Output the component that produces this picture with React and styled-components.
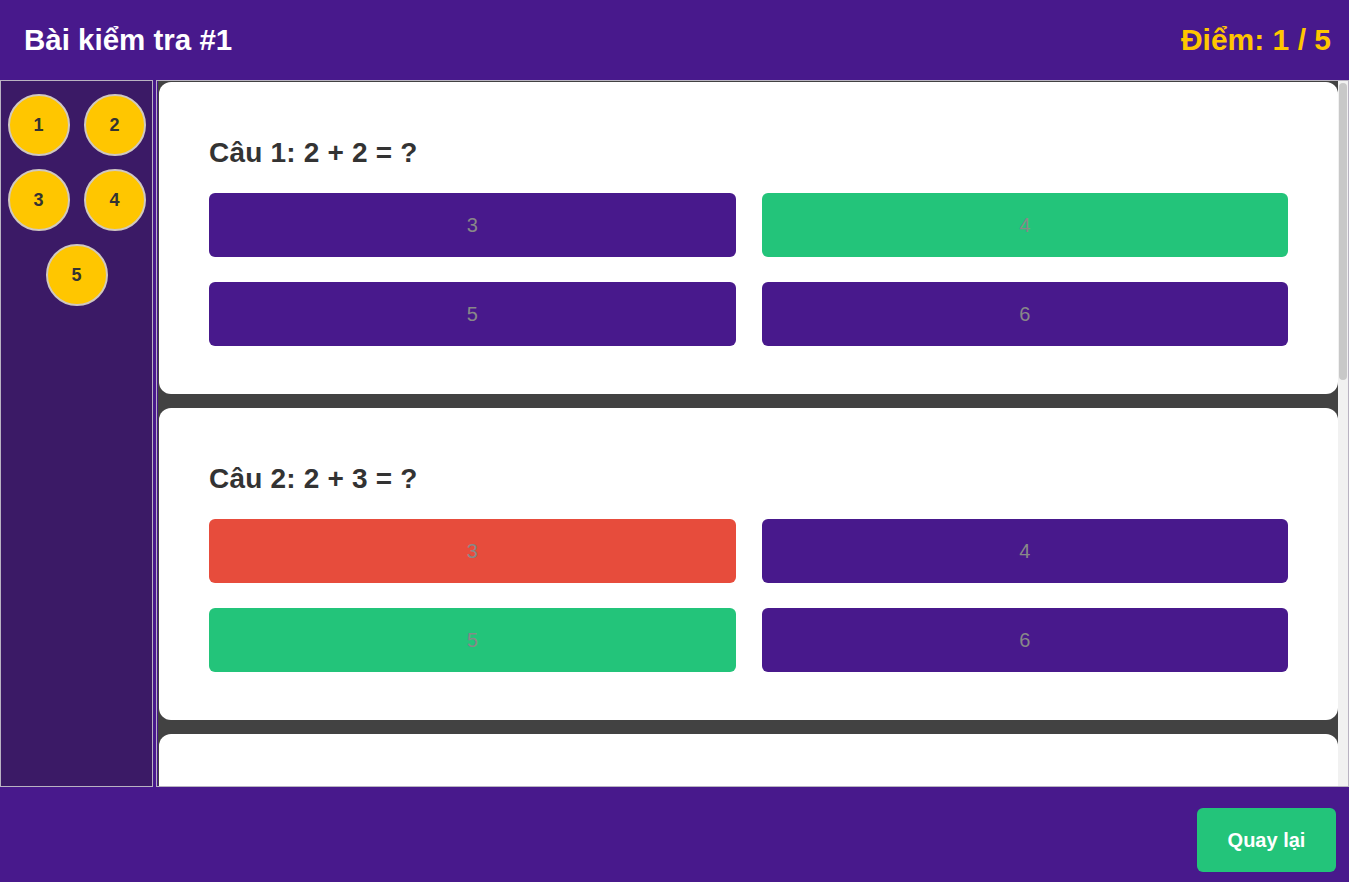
import React from 'react'
import styled, { createGlobalStyle } from 'styled-components'

const GlobalStyle = createGlobalStyle`
  html, body {
    margin: 0;
    padding: 0;
  }
  body {
    font-family: 'Liberation Sans', Arial, sans-serif;
    background: #48198c;
  }
  * {
    box-sizing: border-box;
  }
`

const questions = [
  { id: 1, text: 'Câu 1: 2 + 2 = ?', answers: ['3', '4', '5', '6'], state: ['', 'right', '', ''] },
  { id: 2, text: 'Câu 2: 2 + 3 = ?', answers: ['3', '4', '5', '6'], state: ['wrong', '', 'right', ''] },
  { id: 3, text: 'Câu 3: 3 + 3 = ?', answers: ['5', '6', '7', '8'], state: ['', '', '', ''] },
  { id: 4, text: 'Câu 4: 4 + 3 = ?', answers: ['6', '7', '8', '9'], state: ['', '', '', ''] },
  { id: 5, text: 'Câu 5: 5 + 5 = ?', answers: ['9', '10', '11', '12'], state: ['', '', '', ''] }
]

const colors = {
  '': '#48198c',
  right: '#23c47a',
  wrong: '#e74c3c'
}

const App = () => {
  return (
    <>
      <GlobalStyle />
      <Page>
        <Header>
          <Title>Bài kiểm tra #1</Title>
          <Score>Điểm: 1 / 5</Score>
        </Header>
        <Middle>
          <Sidebar>
            {questions.map(q => (
              <Dot key={q.id}>{q.id}</Dot>
            ))}
          </Sidebar>
          <MainWrap>
            <Scroller>
              {questions.map(q => (
                <Card key={q.id}>
                  <Question>{q.text}</Question>
                  <Answers>
                    {q.answers.map((a, i) => (
                      <Answer key={i} $state={q.state[i]}>
                        {a}
                      </Answer>
                    ))}
                  </Answers>
                </Card>
              ))}
            </Scroller>
            {/* headless browser hides native scrollbars, so draw one */}
            <Track>
              <Thumb />
            </Track>
          </MainWrap>
        </Middle>
        <Footer>
          <BackButton>Quay lại</BackButton>
        </Footer>
      </Page>
    </>
  )
}

const Page = styled.div`
  height: 100vh;
  display: flex;
  flex-direction: column;
  background: #48198c;
  overflow: hidden;
`

const Header = styled.header`
  height: 80px;
  flex-shrink: 0;
  display: flex;
  align-items: center;
  justify-content: space-between;
  padding: 0 18px 0 24px;
`

const Title = styled.h1`
  margin: 0;
  font-size: 29.5px;
  font-weight: 700;
  color: #fff;
`

const Score = styled.div`
  font-size: 30px;
  font-weight: 700;
  color: #ffc600;
`

const Middle = styled.div`
  flex: 1;
  min-height: 0;
  display: flex;
  gap: 3px;
`

const Sidebar = styled.aside`
  width: 153px;
  flex-shrink: 0;
  background: #3b1a66;
  border: 1px solid #b9b3c2;
  display: flex;
  flex-wrap: wrap;
  justify-content: center;
  align-content: flex-start;
  gap: 13px 14px;
  padding: 13px 0;
`

const Dot = styled.div`
  width: 62px;
  height: 62px;
  border-radius: 50%;
  background: #ffc600;
  border: 2px solid #d0c8c0;
  display: flex;
  align-items: center;
  justify-content: center;
  font-size: 18px;
  font-weight: 700;
  color: #333;
`

const MainWrap = styled.main`
  flex: 1;
  min-width: 0;
  position: relative;
  background: #424242;
  border: 1px solid #b9b3c2;
  box-shadow: inset 1px 0 0 #48198c;
`

const Scroller = styled.div`
  height: 100%;
  overflow-y: auto;
  padding: 1px 10px 0 2px;
  scrollbar-width: none;
`

const Track = styled.div`
  position: absolute;
  top: 0;
  right: 0;
  bottom: 0;
  width: 10px;
  background: #f1f1f1;
  padding: 2px 1px;
`

const Thumb = styled.div`
  height: 297px;
  border-radius: 4px;
  background: #c8c8c8;
`

const Card = styled.section`
  background: #fff;
  border-radius: 12px;
  padding: 55px 50px 48px;
  margin-bottom: 14px;
`

const Question = styled.h2`
  margin: 0 0 24px;
  font-size: 28px;
  line-height: 32px;
  font-weight: 700;
  color: #333;
  letter-spacing: 0.2px;
`

const Answers = styled.div`
  display: grid;
  grid-template-columns: 1fr 1fr;
  gap: 25px 26px;
`

const Answer = styled.button`
  height: 64px;
  border: none;
  border-radius: 6px;
  background: ${p => colors[p.$state]};
  color: #888;
  font-family: inherit;
  font-size: 20px;
  cursor: pointer;
`

const Footer = styled.footer`
  height: 95px;
  flex-shrink: 0;
  display: flex;
  justify-content: flex-end;
  align-items: flex-start;
  padding: 21px 13px 0 0;
`

const BackButton = styled.button`
  width: 139px;
  height: 64px;
  border: none;
  border-radius: 6px;
  background: #23c47a;
  color: #fff;
  font-family: inherit;
  font-size: 20px;
  font-weight: 700;
  cursor: pointer;
`

export default App
